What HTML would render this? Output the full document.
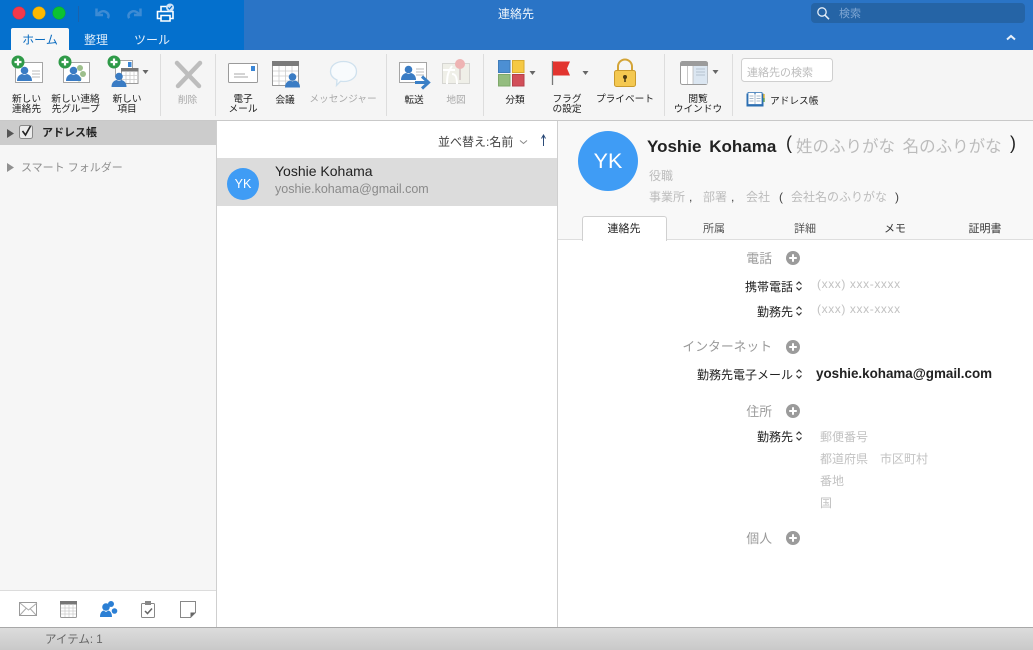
<!DOCTYPE html>
<html lang="ja"><head><meta charset="utf-8"><title>連絡先</title>
<style>
html,body{margin:0;padding:0;width:1033px;height:650px;overflow:hidden;background:#fff}
body{position:relative;font-family:"Liberation Sans","Noto Sans CJK JP",sans-serif;color:#222}
.b{position:absolute}
.t{position:absolute;white-space:nowrap;line-height:14px;height:14px}
.c{transform:translateX(-50%)}
.r{transform:translateX(-100%)}
.l{font-size:9.7px;color:#222;text-align:center}
.m{top:95px;height:auto;line-height:10px}
.g{color:#a9a9a9}
.h{font-size:12.8px;color:#9a9a9a}
.v{font-size:12px;color:#222}
.p{font-size:12px;color:#c2c2c2}
.x{letter-spacing:.6px}
svg{position:absolute;left:0;top:0}
</style></head><body>
<div class="b" style="left:0;top:0;width:1033px;height:50px;background:#2a74c6"></div>
<div class="b" style="left:0;top:0;width:244px;height:50px;background:#0470cd"></div>
<div class="b" style="left:0;top:50px;width:1033px;height:70px;background:#f5f5f5"></div>
<div class="b" style="left:0;top:120px;width:1033px;height:1px;background:#c9c9c9"></div>
<div class="b" style="left:11px;top:28px;width:58px;height:22px;background:#f8f8f8;border-radius:2px 2px 0 0"></div>
<div class="b" style="left:811px;top:3px;width:214px;height:20px;background:#2564a6;border-radius:4px"></div>

<div class="b" style="left:0;top:121px;width:216px;height:469px;background:#f6f6f6"></div>
<div class="b" style="left:0;top:121px;width:216px;height:24px;background:#cccccc"></div>
<div class="b" style="left:216px;top:121px;width:1px;height:507px;background:#cfcfcf"></div>
<div class="b" style="left:0;top:590px;width:216px;height:1px;background:#dcdcdc"></div>
<div class="b" style="left:217px;top:158px;width:340px;height:48px;background:#dcdcdc"></div>
<div class="b" style="left:557px;top:121px;width:1px;height:507px;background:#cfcfcf"></div>
<div class="b" style="left:558px;top:121px;width:475px;height:118px;background:#f8f8f8"></div>
<div class="b" style="left:558px;top:239px;width:475px;height:1px;background:#dedede"></div>
<div class="b" style="left:582px;top:216px;width:83px;height:24px;background:#fff;border:1px solid #d0d0d0;border-bottom:0;border-radius:3px 3px 0 0"></div>
<div class="b" style="left:0;top:627px;width:1033px;height:23px;background:linear-gradient(#dcdcdc,#c9c9c9);border-top:1px solid #a8a8a8;box-sizing:border-box"></div>

<svg width="1033" height="650" viewBox="0 0 1033 650" fill="none">
<defs>
<g id="person"><circle cx="0" cy="-4.500" r="3.800" fill="#3a7cc4"/><path d="M-7.500 6c0-5 3-6.500 5-7l2.500 1 2.500-1c2 .5 5 2 5 7z" fill="#3a7cc4"/></g>
<g id="plus"><circle r="6.500" fill="#2f9a48"/><path d="M-3.500 0h7M0-3.500v7" stroke="#fff" stroke-width="2.200"/></g>
<path id="dd" d="M-3-2h6l-3 4z" fill="#666"/>
<g id="add"><circle r="7" fill="#9b9b9b"/><path d="M-3.800 0h7.600M0-3.800v7.600" stroke="#fff" stroke-width="2"/></g>
<path id="ud" d="M-2.500-1.500 0-4l2.500 2.500M-2.500 1.500 0 4l2.500-2.500" stroke="#333" stroke-width="1.200"/>
</defs>
<!-- traffic lights -->
<circle cx="19" cy="13" r="6.300" fill="#f4394a" stroke="#d92c3c" stroke-width=".5"/>
<circle cx="39" cy="13" r="6.300" fill="#fdb900" stroke="#e0a300" stroke-width=".5"/>
<circle cx="59" cy="13" r="6.300" fill="#0cc233" stroke="#09a82b" stroke-width=".5"/>
<path d="M78.500 6v16" stroke="#1a62ad"/>
<!-- undo / redo -->
<path d="M96.500 8.500v6.500h6.500" stroke="#3d8bd4" stroke-width="2.500"/><path d="M97.500 14.500c2.500-3 5.500-4 8-2.800 3 1.400 3.800 4 2.300 6.500" stroke="#3d8bd4" stroke-width="2.500"/>
<path d="M140.500 8.500v6.500h-6.500" stroke="#3d8bd4" stroke-width="2.500"/><path d="M139.500 14.500c-2.500-3-5.500-4-8-2.800-3 1.400-3.800 4-2.300 6.500" stroke="#3d8bd4" stroke-width="2.500"/>
<!-- print -->
<path d="M161 12V6.500h8V12M161 18.500h-3.500v-7h15.500v7h-3M161 15.500h9V21h-9z" stroke="#fff" stroke-width="1.600" fill="none"/>
<circle cx="170" cy="7.500" r="4" fill="#cfe3f7"/><path d="M168 7.500l1.500 1.500 2.500-3" stroke="#0470cd" stroke-width="1.200"/>
<!-- separators -->
<path d="M160.500 54v62M215.500 54v62M386.500 54v62M483.500 54v62M664.500 54v62M732.500 54v62" stroke="#dddddd"/>
<!-- new contact -->
<rect x="15.500" y="62.500" width="27" height="20" fill="#fff" stroke="#a5a5a5"/>
<path d="M32 71h8M32 74h8M32 77h8" stroke="#bbb"/>
<use href="#person" x="24.500" y="75"/><use href="#plus" x="18" y="62"/>
<!-- group -->
<rect x="63.500" y="62.500" width="26" height="20" fill="#fff" stroke="#a5a5a5"/>
<circle cx="80" cy="68" r="3" fill="#9dbf8c"/><circle cx="83" cy="74" r="3" fill="#9dbf8c"/><circle cx="79" cy="79" r="2.500" fill="#9dbf8c"/>
<use href="#person" x="73.500" y="75"/><use href="#plus" x="65" y="62"/>
<!-- new item -->
<rect x="115.500" y="60.500" width="17" height="16" fill="#fff" stroke="#a5a5a5"/>
<rect x="128" y="62" width="3.500" height="5" fill="#3a86d6"/>
<rect x="121.500" y="68.500" width="16.500" height="15" fill="#fff" stroke="#999"/>
<rect x="121" y="68" width="17.500" height="3.500" fill="#777"/>
<path d="M126 72v11M130 72v11M134 72v11M122 75.500h16M122 79.500h16" stroke="#ccc" stroke-width=".8"/>
<use href="#person" x="119" y="81"/><use href="#plus" x="114" y="62"/>
<use href="#dd" x="145.500" y="72"/>
<!-- delete -->
<path d="M177 63 199 86M200 63 178 86" stroke="#bdbdbd" stroke-width="4.500" stroke-linecap="round"/>
<!-- mail -->
<rect x="228.500" y="63.500" width="29" height="19" rx="1" fill="#fff" stroke="#9a9a9a"/>
<rect x="251" y="66" width="4" height="5" fill="#3a86d6"/>
<path d="M234 74h11M234 77h14" stroke="#aaa"/>
<!-- meeting -->
<rect x="272.500" y="61.500" width="26" height="24" fill="#fff" stroke="#999"/>
<rect x="272" y="61" width="27" height="5" fill="#7b7b7b"/>
<path d="M279 66v19M285.500 66v19M292 66v19M273 71h25M273 76h25M273 81h25" stroke="#ccc" stroke-width=".8"/>
<use href="#person" x="292.500" y="81.500"/>
<!-- messenger -->
<path d="M343.500 61.500c7.500 0 13 4 13 10s-5.500 10-13 10c-1 0-2 0-3-.2l-4 4.200 .5-5.500c-4-1.800-6.500-5-6.500-8.500 0-6 5.500-10 13-10z" fill="#f8fbfd" stroke="#cfe1ee" stroke-width="1.300"/>
<!-- forward -->
<rect x="399.500" y="62.500" width="27" height="20" fill="#fff" stroke="#a5a5a5"/>
<path d="M416 69h8M416 72h8M416 75h8" stroke="#bbb"/>
<use href="#person" x="408.500" y="74"/>
<path d="M415 82.500h13M422 76.500l6.500 6-6.500 6" stroke="#3a7fc6" stroke-width="3"/>
<!-- map -->
<rect x="442.500" y="63.500" width="27" height="20" fill="#efefe8" stroke="#d6d6d2"/>
<path d="M447 84c0-8 1-12 5-18M452 74c3 0 5 2 5 10M443 70h12" stroke="#fff" stroke-width="2"/>
<path d="M460 68v12" stroke="#c9b9b9" stroke-width="1.200"/>
<circle cx="460" cy="64" r="5" fill="#eeb3b3"/>
<!-- categories -->
<rect x="498.500" y="60.500" width="11.500" height="12" fill="#4c8fd3" stroke="#3f7cba"/>
<rect x="512.500" y="60.500" width="11.500" height="12" fill="#f6c944" stroke="#d8ab30"/>
<rect x="498.500" y="74.500" width="11.500" height="11.500" fill="#93bc7e" stroke="#7ea86a"/>
<rect x="512.500" y="74.500" width="11.500" height="11.500" fill="#d24f59" stroke="#b5404a"/>
<use href="#dd" x="532.500" y="73"/>
<!-- flag -->
<path d="M552.500 61v24" stroke="#777" stroke-width="1.300"/>
<path d="M553 61.500h17l-3 7 3 7h-17z" fill="#e2342f"/>
<use href="#dd" x="585.500" y="73"/>
<!-- lock -->
<path d="M618 71v-4.500a7 7 0 0 1 14 0V71" stroke="#d3a437" stroke-width="2"/>
<rect x="614.500" y="70.500" width="21" height="16" rx="2" fill="#f4c850" stroke="#c99a2c"/>
<circle cx="625" cy="77" r="2" fill="#4b3a12"/><path d="M625 78v4" stroke="#4b3a12" stroke-width="1.500"/>
<!-- reading pane -->
<rect x="680.500" y="61.500" width="27" height="23" rx="2" fill="#fff" stroke="#9a9a9a"/>
<path d="M681 66v-2.500a2 2 0 0 1 2-2h23a2 2 0 0 1 2 2V66z" fill="#9b9b9b"/>
<rect x="693" y="66" width="14.500" height="18" fill="#dbe6f1"/>
<path d="M687.500 66v18M693 66v18" stroke="#bbb" stroke-width=".8"/>
<path d="M696 69h9M696 72h9M696 75h9" stroke="#a8b5c2" stroke-width=".8"/>
<use href="#dd" x="715.500" y="72"/>
<!-- search field + book -->
<rect x="741.500" y="58.500" width="91" height="23" rx="3" fill="#fff" stroke="#cfcfcf"/>
<path d="M746.500 93.500h17v13h-17z" fill="#2c6fb2"/>
<path d="M748 92.500h6.500l.500 1.500.500-1.500h6.500v12h-14z" fill="#fff" stroke="#2c6fb2" stroke-width=".8"/>
<path d="M755 94v10M749.500 96h4M749.500 98.500h4M749.500 101h4M756.500 96h4M756.500 98.500h4M756.500 101h4" stroke="#8aa3bb" stroke-width=".7"/>
<path d="M764 94v4" stroke="#e6b93c" stroke-width="1.500"/><path d="M764 98v4" stroke="#6aa85c" stroke-width="1.500"/>
<!-- title bar search and collapse -->
<circle cx="822" cy="12" r="4.200" stroke="#e5eef8" stroke-width="1.300"/><path d="M825 15.200l4 4" stroke="#e5eef8" stroke-width="1.500"/>
<path d="M1007 39.500l4-3.500 4 3.500" stroke="#e8f0f9" stroke-width="2"/>
<!-- sidebar -->
<path d="M7 129l7 4.500-7 4.500z" fill="#555"/>
<rect x="19.500" y="125.500" width="13" height="13" rx="2" fill="#ececec" stroke="#888"/>
<path d="M22.500 131l3 4 5-9" stroke="#222" stroke-width="1.600"/>
<path d="M7 163l7 4.500-7 4.500z" fill="#909090"/>
<!-- sort -->
<path d="M520 140.500l3.500 3 3.500-3" stroke="#888" stroke-width="1"/>
<path d="M543.500 146v-10M541.500 138.500l2-3.500 2 3.500" stroke="#2b4a78" stroke-width="1"/>
<!-- avatars -->
<circle cx="243" cy="184" r="16" fill="#3f9cf5"/>
<circle cx="608" cy="161" r="30" fill="#3f9cf5"/>
<!-- detail adds -->
<use href="#add" x="793" y="258"/><use href="#add" x="793" y="347"/><use href="#add" x="793" y="411"/><use href="#add" x="793" y="538"/>
<use href="#ud" x="799" y="286"/><use href="#ud" x="799" y="311"/><use href="#ud" x="799" y="374"/><use href="#ud" x="799" y="436"/>
<!-- bottom nav -->
<rect x="19.500" y="602.500" width="17" height="13" fill="#fff" stroke="#999"/><path d="M20 603l8.500 7 8.500-7M20 615l6-6.500M36 615l-6-6.500" stroke="#aaa"/>
<rect x="60.500" y="601.500" width="16" height="16" rx="1" fill="#fff" stroke="#999"/><rect x="60" y="601" width="17" height="3.500" fill="#777"/>
<path d="M65 604v13M69 604v13M73 604v13M61 608h15M61 611h15M61 614h15" stroke="#ccc" stroke-width=".7"/>
<circle cx="111" cy="604" r="3" fill="#2b7fd4"/><circle cx="114.500" cy="611" r="2.800" fill="#2b7fd4"/>
<circle cx="106" cy="607" r="3.800" fill="#2b7fd4"/><path d="M100 617c0-4.500 2-6 3.500-6.500l2.500 1.500 2.500-1.500c1.500.5 3.500 2 3.500 6.500z" fill="#2b7fd4"/>
<rect x="141.500" y="603.500" width="13" height="14" rx="1" fill="#fff" stroke="#888"/><rect x="145" y="601" width="6" height="4" fill="#888"/><path d="M145 611l2.500 2.500 4.500-5" stroke="#666" stroke-width="1.500"/>
<path d="M180.500 601.500h15v11l-5 5h-10z" fill="#fff" stroke="#888"/><path d="M195.500 612.500h-5v5z" fill="#666"/>
</svg>

<div class="t c" style="left:40px;top:33px;font-size:12px;color:#0b6cc0">ホーム</div>
<div class="t c" style="left:96px;top:33px;font-size:12px;color:#dcebf9">整理</div>
<div class="t c" style="left:152px;top:33px;font-size:12px;color:#e8f1fb">ツール</div>
<div class="t c" style="left:516px;top:7px;font-size:12px;color:#f2f7fc">連絡先</div>
<div class="t" style="left:839px;top:7px;font-size:11px;color:#7ea6d3">検索</div>

<div class="t c l m" style="left:26.500px">新しい<br>連絡先</div>
<div class="t c l m" style="left:75.500px">新しい連絡<br>先グループ</div>
<div class="t c l m" style="left:127px">新しい<br>項目</div>
<div class="t c l g" style="left:187.500px;top:93.500px">削除</div>
<div class="t c l m" style="left:243px">電子<br>メール</div>
<div class="t c l" style="left:285px;top:93.500px">会議</div>
<div class="t c l g" style="left:343px;top:92.500px">メッセンジャー</div>
<div class="t c l" style="left:414px;top:93.500px">転送</div>
<div class="t c l g" style="left:456px;top:93.500px">地図</div>
<div class="t c l" style="left:515px;top:93.500px">分類</div>
<div class="t c l m" style="left:567px">フラグ<br>の設定</div>
<div class="t c l" style="left:625px;top:92.500px">プライベート</div>
<div class="t c l m" style="left:698px">閲覧<br>ウインドウ</div>
<div class="t" style="left:747px;top:65.500px;font-size:11px;color:#bcbcbc">連絡先の検索</div>
<div class="t" style="left:770px;top:94.500px;font-size:9.700px;color:#222">アドレス帳</div>

<div class="t" style="left:42px;top:126px;font-size:11px;font-weight:bold;color:#222">アドレス帳</div>
<div class="t" style="left:21px;top:161px;font-size:11px;color:#8f8f8f">スマート フォルダー</div>

<div class="t" style="left:438px;top:135px;font-size:12px;color:#444">並べ替え:名前</div>
<div class="t" style="left:275px;top:164px;font-size:14px;color:#222">Yoshie Kohama</div>
<div class="t" style="left:275px;top:182px;font-size:12.500px;color:#8a8a8a">yoshie.kohama@gmail.com</div>
<div class="t c" style="left:243px;top:177px;font-size:12.500px;color:#fff">YK</div>

<div class="t c" style="left:608px;top:154px;font-size:21.500px;color:#fff">YK</div>
<div class="t" style="left:647px;top:140px;font-size:17px;font-weight:bold;color:#222;word-spacing:3px">Yoshie Kohama</div>
<div class="t" style="left:786px;top:136px;font-size:18px;color:#222">(</div>
<div class="t" style="left:796px;top:140px;font-size:16.500px;color:#bcbcbc;word-spacing:3px">姓のふりがな 名のふりがな</div>
<div class="t" style="left:1010px;top:136px;font-size:18px;color:#222">)</div>
<div class="t" style="left:649px;top:169px;font-size:12px;color:#bcbcbc">役職</div>
<div class="t" style="left:649px;top:190px;font-size:12px;color:#bcbcbc">事業所</div>
<div class="t" style="left:689px;top:190px;font-size:12px;color:#444">,</div>
<div class="t" style="left:703px;top:190px;font-size:12px;color:#bcbcbc">部署</div>
<div class="t" style="left:731px;top:190px;font-size:12px;color:#444">,</div>
<div class="t" style="left:746px;top:190px;font-size:12px;color:#bcbcbc">会社</div>
<div class="t" style="left:779px;top:190px;font-size:12px;color:#444">(</div>
<div class="t" style="left:791px;top:190px;font-size:12px;color:#bcbcbc">会社名のふりがな</div>
<div class="t" style="left:895px;top:190px;font-size:12px;color:#444">)</div>

<div class="t c" style="left:624px;top:222px;font-size:11px;color:#222">連絡先</div>
<div class="t c" style="left:714px;top:222px;font-size:11px;color:#555">所属</div>
<div class="t c" style="left:805px;top:222px;font-size:11px;color:#555">詳細</div>
<div class="t c" style="left:895px;top:222px;font-size:11px;color:#333">メモ</div>
<div class="t c" style="left:985px;top:222px;font-size:11px;color:#333">証明書</div>

<div class="t r h" style="left:772px;top:252px">電話</div>
<div class="t r v" style="left:793px;top:280px">携帯電話</div>
<div class="t p x" style="left:817px;top:277px">(xxx) xxx-xxxx</div>
<div class="t r v" style="left:793px;top:305px">勤務先</div>
<div class="t p x" style="left:817px;top:302px">(xxx) xxx-xxxx</div>
<div class="t r h" style="left:772px;top:340px">インターネット</div>
<div class="t r v" style="left:793px;top:368px">勤務先電子メール</div>
<div class="t" style="left:816px;top:367px;font-size:13.400px;font-weight:bold;color:#222">yoshie.kohama@gmail.com</div>
<div class="t r h" style="left:772px;top:405px">住所</div>
<div class="t r v" style="left:793px;top:430px">勤務先</div>
<div class="t p" style="left:820px;top:430px">郵便番号</div>
<div class="t p" style="left:820px;top:452px">都道府県</div>
<div class="t p" style="left:880px;top:452px">市区町村</div>
<div class="t p" style="left:820px;top:474px">番地</div>
<div class="t p" style="left:820px;top:496px">国</div>
<div class="t r h" style="left:772px;top:532px">個人</div>

<div class="t" style="left:45px;top:633px;font-size:11.500px;color:#666">アイテム: 1</div>
</body></html>
